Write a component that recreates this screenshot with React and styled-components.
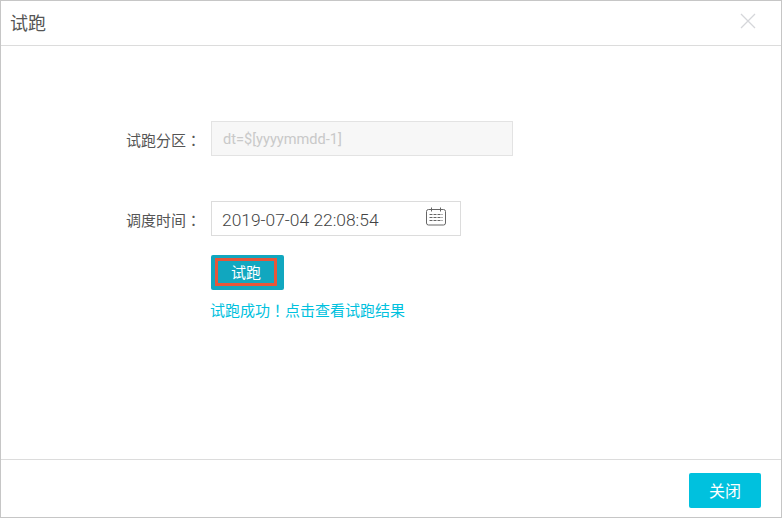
import React from 'react';
import styled, { createGlobalStyle } from 'styled-components';

const Global = createGlobalStyle`
html, body {
  margin: 0;
  padding: 0;
  background: #fff;
}
* {
  box-sizing: border-box;
}
`

const FONT = `Roboto, "Noto Sans CJK SC", sans-serif`

const Dialog = styled.div`
width: 782px;
height: 518px;
display: flex;
flex-direction: column;
background: #fff;
border: 1px solid #c6c6c6;
font-family: ${FONT};
`

const Header = styled.div`
height: 45px;
flex: none;
display: flex;
align-items: center;
justify-content: space-between;
padding: 0 25px 0 10px;
border-bottom: 1px solid #dcdcdc;
`

const Title = styled.div`
font-size: 18px;
color: #555;
margin-top: -3px;
margin-left: -1px;
`

const CloseIcon = styled.svg`
width: 16px;
height: 16px;
display: block;
margin-top: -5px;
`

const Body = styled.div`
flex: 1;
padding: 75px 0 0 0;
display: flex;
flex-direction: column;
`

const Row = styled.div`
display: flex;
align-items: center;
height: 35px;
margin-bottom: ${props => props.$gap || 0}px;
`

const Label = styled.div`
width: 210px;
flex: none;
padding: 2px 10px 0 0;
text-align: right;
font-size: 15px;
color: #555;
`

// traditional-chinese cut, its fullwidth punctuation sits centred in the box
const Punct = styled.span`
font-family: Roboto, "Noto Sans CJK TC", sans-serif;
`

const ReadonlyInput = styled.div`
width: 302px;
height: 35px;
display: flex;
align-items: center;
padding: 0 11px;
background: #f7f7f7;
border: 1px solid #e3e3e3;
font-size: 14.6px;
color: #c9c9c9;
`

const DateInput = styled.div`
width: 250px;
height: 35px;
display: flex;
align-items: center;
justify-content: space-between;
padding: 2px 14px 0 10px;
background: #fff;
border: 1px solid #dcdcdc;
font-size: 17.4px;
font-weight: 300;
color: #444;
`

const CalendarIcon = styled.svg`
width: 20px;
height: 20px;
display: block;
margin-top: -5px;
`

const Actions = styled.div`
margin: 19px 0 0 210px;
display: flex;
flex-direction: column;
align-items: flex-start;
`

const RunButton = styled.button`
width: 73px;
height: 35px;
padding: 3px 7px 4px 4px;
background: #11a7bf;
border: none;
border-radius: 2px;
font-family: ${FONT};
`

const RunMark = styled.span`
display: flex;
align-items: center;
justify-content: center;
width: 100%;
height: 100%;
padding-bottom: 1px;
border: 3px solid #e5563a;
color: #fff;
font-size: 15px;
`

const ResultLink = styled.a`
margin: 12px 0 0 -1px;
font-size: 15px;
line-height: 18px;
color: #00c1de;
text-decoration: none;
cursor: pointer;
`

const Footer = styled.div`
height: 58px;
flex: none;
display: flex;
justify-content: flex-end;
padding: 13px 20px 0 0;
border-top: 1px solid #dcdcdc;
`

const CloseButton = styled.button`
width: 72px;
height: 35px;
padding: 0 0 2px 0;
background: #00c1de;
border: none;
border-radius: 2px;
color: #fff;
font-size: 16px;
font-family: ${FONT};
`

function App() {
  return (
    <>
      <Global />
      <Dialog>
        <Header>
          <Title>试跑</Title>
          <CloseIcon viewBox="0 0 16 16">
            <path d="M1 1L15 15M15 1L1 15" stroke="#d5d6da" strokeWidth="1.3" fill="none" />
          </CloseIcon>
        </Header>
        <Body>
          <Row $gap={45}>
            <Label>试跑分区<Punct>：</Punct></Label>
            <ReadonlyInput>dt=$[yyyymmdd-1]</ReadonlyInput>
          </Row>
          <Row>
            <Label>调度时间<Punct>：</Punct></Label>
            <DateInput>
              2019-07-04 22:08:54
              <CalendarIcon viewBox="0 0 20 20" fill="none" stroke="#666" strokeWidth="1">
                <rect x="0.5" y="2.5" width="19" height="15.5" rx="2" />
                <path d="M5.5 0.5V4.5M14.5 0.5V4.5" />
                <path d="M3.5 7.5H16.5M3.5 10.5H16.5M3.5 13.5H16.5" strokeDasharray="3 1" />
              </CalendarIcon>
            </DateInput>
          </Row>
          <Actions>
            <RunButton><RunMark>试跑</RunMark></RunButton>
            <ResultLink>试跑成功<Punct>！</Punct>点击查看试跑结果</ResultLink>
          </Actions>
        </Body>
        <Footer>
          <CloseButton>关闭</CloseButton>
        </Footer>
      </Dialog>
    </>
  )
}

export default App
